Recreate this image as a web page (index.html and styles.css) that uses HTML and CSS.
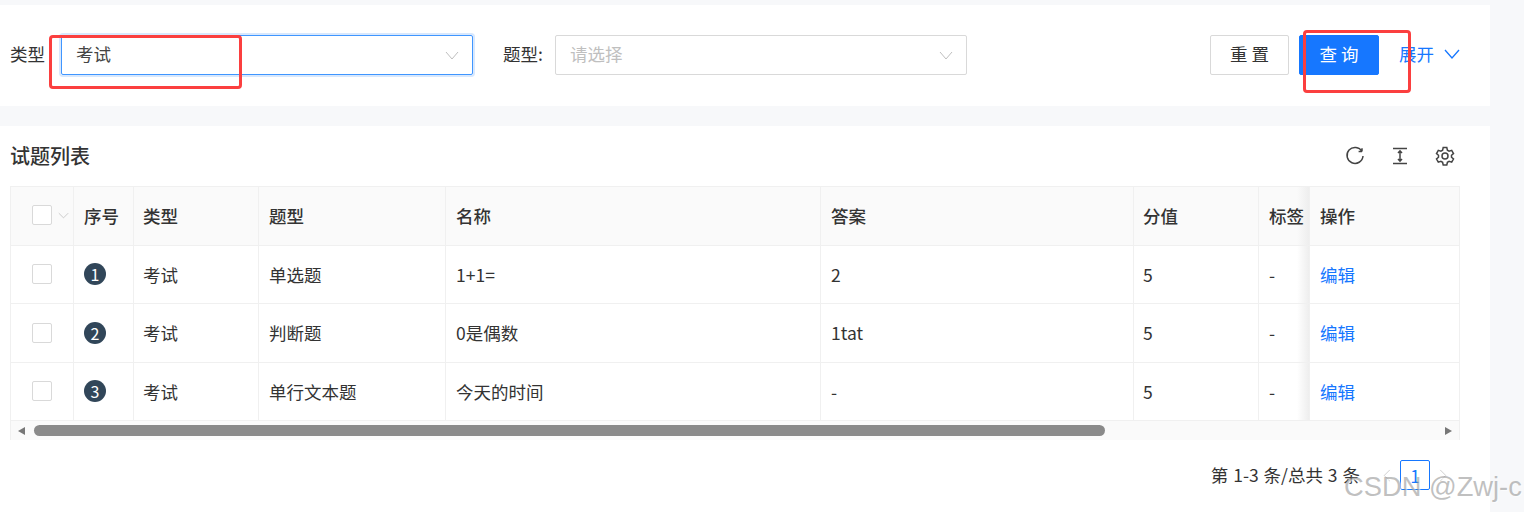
FILE: index.html
```html
<!DOCTYPE html>
<html lang="zh-CN">
  <head>
    <meta charset="UTF-8" />
    <title>试题列表</title>
    <link rel="stylesheet" href="styles.css">
  </head>
  <body>
    <div class="search-card">
      <label class="field-label first">类型</label>
      <div class="select focused">
        <span>考试</span>
        <svg class="arrow" viewBox="0 0 14 9"><path d="M1 1l6 7 6-7" /></svg>
      </div>
      <label class="field-label second">题型:</label>
      <div class="select">
        <span class="placeholder">请选择</span>
        <svg class="arrow" viewBox="0 0 14 9"><path d="M1 1l6 7 6-7" /></svg>
      </div>
      <div class="actions">
        <button class="btn">重 置</button>
        <button class="btn primary">查 询</button>
        <a class="expand">展开
          <svg viewBox="0 0 16 10"><path d="M1 1l7 8 7-8" /></svg>
        </a>
      </div>
    </div>

    <div class="table-card">
      <div class="table-head">
        <h2>试题列表</h2>
        <div class="tools">
          <svg viewBox="0 0 20 20"><path d="M17 5.5V2.2M17 5.5h-3.4M17 5.5A8 8 0 1 0 18 10" /></svg>
          <svg viewBox="0 0 20 20"><path d="M3 2.500h14M3 17.500h14M10 5v10M8 7l2-2.200L12 7M8 13l2 2.200 2-2.200" /></svg>
          <svg viewBox="0 0 20 20"><path d="M8.200 1.600h3.600l.6 2.600 1.700 1 2.600-.8 1.800 3.100-2 1.800v1.900l2 1.800-1.800 3.100-2.600-.8-1.700 1-.6 2.600H8.200l-.6-2.600-1.700-1-2.600.8-1.800-3.100 2-1.800V9.300l-2-1.800 1.800-3.100 2.600.8 1.700-1z" /><circle cx="10" cy="10" r="3" /></svg>
        </div>
      </div>

      <div class="table">
        <div class="row header">
          <div class="cell c-check"><i class="checkbox"></i><svg class="check-arrow" viewBox="0 0 14 8"><path d="M1 1l6 6 6-6" /></svg></div>
          <div class="cell c-no">序号</div>
          <div class="cell c-type">类型</div>
          <div class="cell c-kind">题型</div>
          <div class="cell c-name">名称</div>
          <div class="cell c-answer">答案</div>
          <div class="cell c-score">分值</div>
          <div class="cell c-tag">标签</div>
          <div class="cell c-op">操作</div>
        </div>
        <div class="row">
          <div class="cell c-check"><i class="checkbox"></i></div>
          <div class="cell c-no"><span class="badge">1</span></div>
          <div class="cell c-type">考试</div>
          <div class="cell c-kind">单选题</div>
          <div class="cell c-name">1+1=</div>
          <div class="cell c-answer">2</div>
          <div class="cell c-score">5</div>
          <div class="cell c-tag">-</div>
          <div class="cell c-op"><a>编辑</a></div>
        </div>
        <div class="row tall">
          <div class="cell c-check"><i class="checkbox"></i></div>
          <div class="cell c-no"><span class="badge">2</span></div>
          <div class="cell c-type">考试</div>
          <div class="cell c-kind">判断题</div>
          <div class="cell c-name">0是偶数</div>
          <div class="cell c-answer">1tat</div>
          <div class="cell c-score">5</div>
          <div class="cell c-tag">-</div>
          <div class="cell c-op"><a>编辑</a></div>
        </div>
        <div class="row">
          <div class="cell c-check"><i class="checkbox"></i></div>
          <div class="cell c-no"><span class="badge">3</span></div>
          <div class="cell c-type">考试</div>
          <div class="cell c-kind">单行文本题</div>
          <div class="cell c-name">今天的时间</div>
          <div class="cell c-answer">-</div>
          <div class="cell c-score">5</div>
          <div class="cell c-tag">-</div>
          <div class="cell c-op"><a>编辑</a></div>
        </div>
        <div class="scrollbar">
          <i class="tri left"></i>
          <div class="track"><div class="thumb"></div></div>
          <i class="tri right"></i>
        </div>
      </div>

      <div class="pager">
        <span class="total">第 1-3 条/总共 3 条</span>
        <svg class="page-arrow" viewBox="0 0 8 14"><path d="M7 1L1 7l6 6" /></svg>
        <span class="page">1</span>
        <svg class="page-arrow" viewBox="0 0 8 14"><path d="M1 1l6 6-6 6" /></svg>
      </div>
    </div>

    <!-- red marks drawn over the screenshot, plus the watermark -->
    <div class="mark mark-select"></div>
    <div class="mark mark-query"></div>
    <div class="watermark">CSDN @Zwj-c</div>
  </body>
</html>
```

FILE: styles.css
```css
* {
  box-sizing: border-box;
}
html,
body {
  height: 100%;
}
body {
  margin: 0;
  padding-top: 5px;
  width: 1524px;
  height: 512px;
  overflow: hidden;
  position: relative;
  background-color: #f7f8fa;
  color: #333;
  font-family: "Noto Sans CJK SC", "Liberation Sans", sans-serif;
  font-size: 17.5px;
}
svg path,
svg circle {
  fill: none;
  stroke: currentColor;
}
.search-card {
  width: 1490px;
  height: 101px;
  background-color: #fff;
  display: flex;
  align-items: center;
  padding: 0 30px 1px 10px;
}
.field-label {
  white-space: nowrap;
  line-height: 24px;
  margin-top: -2px;
}
.field-label.first {
  width: 51px;
}
.field-label.second {
  margin-left: 30px;
  width: 52px;
}
.select {
  width: 412px;
  height: 40px;
  border: 1px solid #d9d9d9;
  border-radius: 2px;
  display: flex;
  align-items: center;
  justify-content: space-between;
  padding: 0 13px 0 14px;
  color: #444;
}
.select span {
  line-height: 24px;
  margin-top: -2px;
}
.select.focused {
  border-color: #4096ff;
  box-shadow: 0 0 0 2px #d8e8fd;
}
.placeholder {
  color: #bfbfbf;
}
.arrow {
  width: 14px;
  height: 9px;
  color: #bfbfbf;
}
.actions {
  margin-left: auto;
  display: flex;
  align-items: center;
}
.btn {
  width: 79px;
  height: 40px;
  border: 1px solid #d9d9d9;
  border-radius: 2px;
  background-color: #fff;
  color: #333;
  font-family: inherit;
  font-size: 17.5px;
  line-height: 24px;
  padding: 0 0 3px;
}
.btn.primary {
  width: 80px;
  margin-left: 10px;
  background-color: #1677ff;
  border-color: #1677ff;
  color: #fff;
}
.expand {
  margin-left: 20px;
  color: #1677ff;
  display: flex;
  align-items: center;
  gap: 10px;
  line-height: 24px;
  margin-top: -2px;
}
.expand svg {
  width: 16px;
  height: 10px;
}
.expand path {
  stroke-width: 1.300;
}
.table-card {
  width: 1490px;
  height: 386px;
  margin-top: 20px;
  background-color: #fff;
  padding: 0 30px 0 10px;
}
.table-head {
  height: 60px;
  display: flex;
  align-items: center;
  justify-content: space-between;
}
.table-head h2 {
  margin: 0;
  font-size: 20px;
  line-height: 28px;
  font-weight: 500;
  color: #333;
}
.tools {
  display: flex;
  gap: 25px;
  padding-right: 5px;
  color: #444;
}
.tools svg {
  width: 20px;
  height: 20px;
}
.tools path,
.tools circle {
  stroke-width: 1.500;
}
.table {
  border-top: 1px solid #f0f0f0;
  border-left: 1px solid #f0f0f0;
  border-right: 1px solid #f0f0f0;
}
.row {
  display: flex;
  height: 58px;
  border-bottom: 1px solid #f0f0f0;
}
.row.tall {
  height: 59px;
}
.row.header {
  height: 59px;
  background-color: #fafafa;
  color: #333;
  font-weight: 500;
}
.cell {
  display: flex;
  align-items: center;
  padding-left: 10px;
  padding-bottom: 1px;
  border-right: 1px solid #f0f0f0;
  flex: none;
}
.header .cell {
  padding-bottom: 2px;
}
.c-check {
  width: 63px;
  padding-left: 21px;
  gap: 6px;
}
.c-no {
  width: 60px;
}
.c-type {
  width: 125px;
  padding-left: 9px;
}
.c-kind {
  width: 187px;
}
.c-name {
  width: 375px;
}
.c-answer {
  width: 313px;
}
.c-score {
  width: 125px;
  padding-left: 9px;
}
.c-tag {
  width: 50px;
  border-right: 0;
  overflow: hidden;
  white-space: nowrap;
  background-image: linear-gradient(to right, transparent 38px, #eee);
}
.c-op {
  width: 150px;
  border-right: 0;
  padding-left: 10px;
  border-left: 1px solid #f0f0f0;
}
.c-op a {
  color: #1677ff;
}
.checkbox {
  width: 20px;
  height: 20px;
  flex: none;
  background-color: #fff;
  border: 1px solid #d9d9d9;
  border-radius: 2px;
}
.check-arrow {
  width: 11px;
  height: 7px;
  color: #bfbfbf;
}
.badge {
  width: 22px;
  height: 22px;
  border-radius: 50%;
  background-color: #314659;
  color: #fff;
  display: flex;
  align-items: center;
  justify-content: center;
  font-size: 16px;
}
.scrollbar {
  height: 19px;
  background-color: #fafafa;
  display: flex;
  align-items: center;
  padding: 0 7px 0 7px;
}
.track {
  flex: 1;
  padding: 0 8px 0 9px;
}
.thumb {
  width: 1071px;
  height: 11px;
  border-radius: 6px;
  background-color: #8a8a8a;
}
.tri {
  width: 0;
  height: 0;
  border-top: 4.500px solid transparent;
  border-bottom: 4.500px solid transparent;
}
.tri.left {
  border-right: 7px solid #777;
}
.tri.right {
  border-left: 7px solid #777;
}
.pager {
  display: flex;
  align-items: center;
  justify-content: flex-end;
  height: 30px;
  margin-top: 20px;
  padding-right: 13px;
}
.total {
  margin-right: 23px;
  line-height: 24px;
  white-space: nowrap;
  word-spacing: 1px;
}
.page-arrow {
  width: 8px;
  height: 13px;
  color: #ccc;
}
.page {
  width: 30px;
  height: 30px;
  margin: 0 9px;
  border: 1px solid #1677ff;
  border-radius: 2px;
  color: #1677ff;
  display: flex;
  align-items: center;
  justify-content: center;
}
.mark {
  position: absolute;
  border: 3px solid #fb3f3f;
  border-radius: 4px;
}
.mark-select {
  left: 49px;
  top: 35px;
  width: 193px;
  height: 54px;
}
.mark-query {
  left: 1303px;
  top: 30px;
  width: 108px;
  height: 63px;
}
.watermark {
  position: absolute;
  left: 1344px;
  top: 470px;
  font-family: "Liberation Sans", sans-serif;
  font-size: 27.300px;
  line-height: 34px;
  white-space: nowrap;
  color: rgba(130, 130, 130, 0.5);
  text-shadow: 1px 1px 1px rgba(255, 255, 255, 0.6);
}
```
